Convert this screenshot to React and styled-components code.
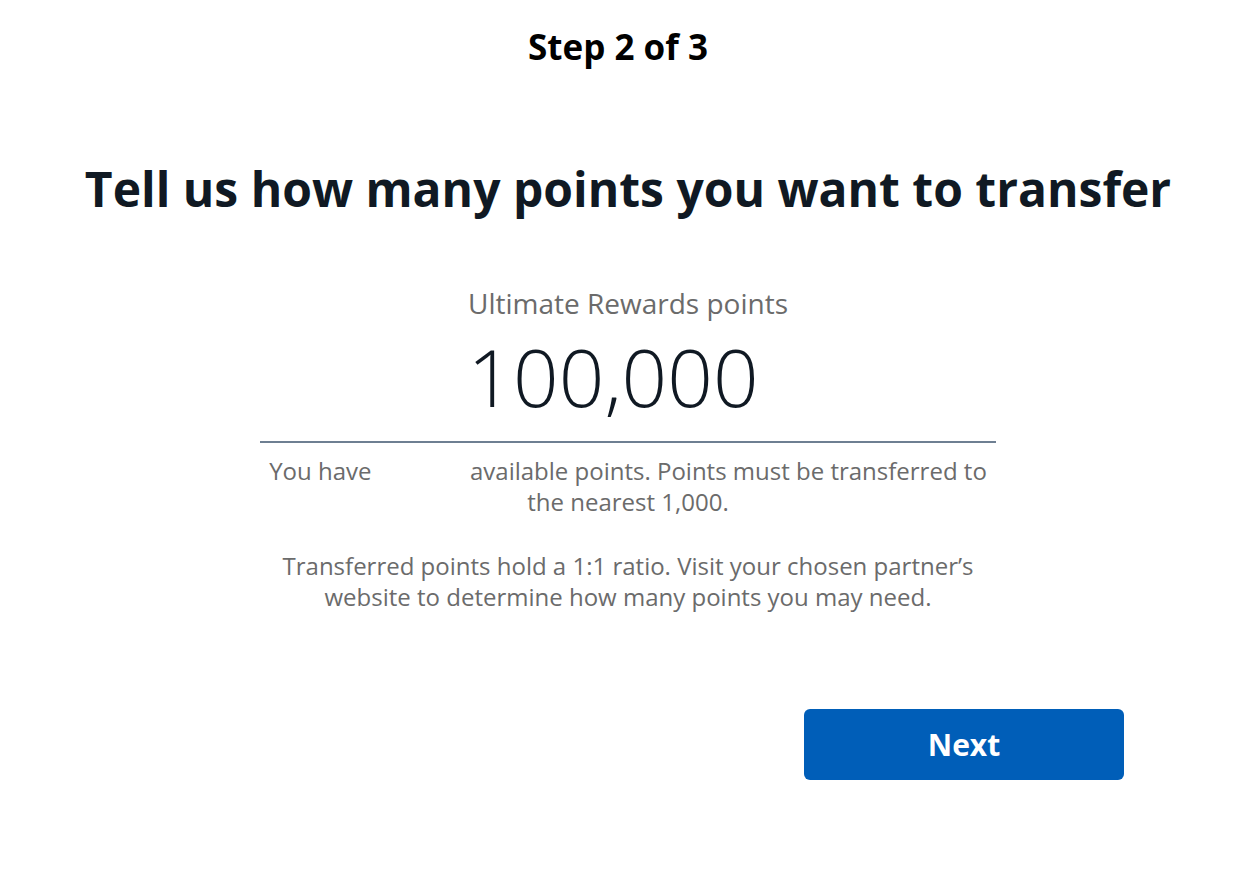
import React from "react";
import styled, { createGlobalStyle } from "styled-components";

const GlobalStyle = createGlobalStyle`
  html, body {
    margin: 0;
    padding: 0;
    background: #ffffff;
    font-family: "Open Sans", "Noto Sans", Arial, sans-serif;
  }
`;

const Page = styled.div`
  width: 1236px;
  min-height: 888px;
  display: flex;
  flex-direction: column;
`;

const StepLabel = styled.h2`
  margin: 0;
  padding-top: 25px;
  font-size: 35px;
  line-height: 44px;
  font-weight: 700;
  color: #000000;
  text-align: center;
`;

const Main = styled.main`
  display: flex;
  flex-direction: column;
  align-items: center;
  padding-left: 20px;
`;

const Headline = styled.h1`
  margin: 90px 0 0;
  font-size: 48px;
  line-height: 60px;
  font-weight: 700;
  color: #101923;
  text-align: center;
`;

const AmountField = styled.div`
  margin-top: 66px;
  width: 736px;
  display: flex;
  flex-direction: column;
  align-items: center;
  border-bottom: 2px solid #6e7f92;
`;

const FieldLabel = styled.label`
  font-size: 28px;
  line-height: 36px;
  color: #6b6b6b;
`;

const Amount = styled.div`
  padding: 0 30px 10px 0;
  font-size: 80px;
  line-height: 110px;
  font-weight: 300;
  color: #101923;
`;

const HelpText = styled.p`
  margin: ${(p) => p.$top}px 0 0;
  width: ${(p) => p.$width}px;
  font-size: 24px;
  line-height: 31px;
  color: #6b6b6b;
  text-align: center;
`;

const Redacted = styled.span`
  display: inline-block;
  width: 86px;
`;

const Footer = styled.div`
  display: flex;
  justify-content: flex-end;
  padding: 97px 112px 0 0;
`;

const NextButton = styled.button`
  width: 320px;
  height: 71px;
  border: none;
  border-radius: 6px;
  background: #005eb8;
  color: #ffffff;
  font-family: inherit;
  font-size: 30px;
  font-weight: 700;
  cursor: pointer;
`;

export default function App() {
  return (
    <Page>
      <GlobalStyle />
      <StepLabel>Step 2 of 3</StepLabel>
      <Main>
        <Headline>Tell us how many points you want to transfer</Headline>
        <AmountField>
          <FieldLabel>Ultimate Rewards points</FieldLabel>
          <Amount>100,000</Amount>
        </AmountField>
        <HelpText $top={12} $width={736}>
          You have <Redacted /> available points. Points must be transferred to
          the nearest 1,000.
        </HelpText>
        <HelpText $top={33} $width={720}>
          Transferred points hold a 1:1 ratio. Visit your chosen partner’s
          website to determine how many points you may need.
        </HelpText>
      </Main>
      <Footer>
        <NextButton>Next</NextButton>
      </Footer>
    </Page>
  );
}
